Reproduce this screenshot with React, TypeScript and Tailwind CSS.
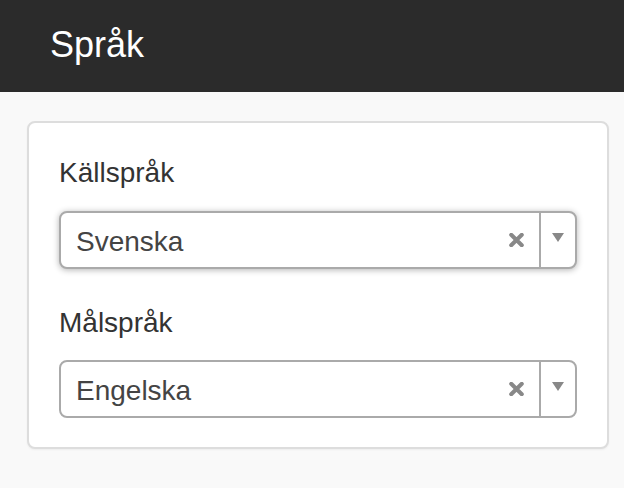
import React from "react";

function ClearIcon() {
  return (
    <svg width="15" height="14" viewBox="0 0 15 14" className="block">
      <path d="M2.2 1.8 L12.8 12.2 M12.8 1.8 L2.2 12.2" stroke="#888" strokeWidth="4" strokeLinecap="round" />
    </svg>
  );
}

function Caret() {
  return (
    <svg width="12" height="9" viewBox="0 0 12 9" className="block">
      <path d="M0 0 H12 L6 9 Z" fill="#888" />
    </svg>
  );
}

function LangSelect({ value, focused }: { value: string; focused?: boolean }) {
  return (
    <div
      className={
        "flex h-[58px] items-stretch rounded-[8px] border-2 border-[#aaa] bg-white " +
        (focused ? "shadow-[0_1px_6px_rgba(0,0,0,0.3)]" : "")
      }
    >
      <div className="flex flex-1 items-center pl-[15px] pt-[3px] text-[28px] text-[#444]">{value}</div>
      <div className="flex w-[36px] items-center justify-center pr-[9px]">
        <ClearIcon />
      </div>
      <div className="w-[2px] bg-[#aaa]" />
      <div className="flex w-[34px] justify-center pt-[20px]">
        <Caret />
      </div>
    </div>
  );
}

export default function App() {
  return (
    <div className="min-h-[488px] bg-[#f9f9f9] font-['Liberation_Sans',Arial,sans-serif]">
      <div className="flex h-[92px] items-center bg-[#2b2b2b] pl-[50px]">
        <h1 className="mb-[2px] text-[36px] leading-none text-white">Språk</h1>
      </div>
      <div className="pl-[27px] pr-[15px] pt-[29px]">
        <div className="rounded-[8px] border-2 border-[#ddd] bg-white px-[30px] pt-[30px] pb-[29px] shadow-[0_1px_2px_rgba(0,0,0,0.05)]">
          <label className="mb-[18px] block text-[28px] leading-[40px] text-[#333]">Källspråk</label>
          <LangSelect value="Svenska" focused />
          <label className="mt-[34px] mb-[17px] block text-[28px] leading-[40px] text-[#333]">Målspråk</label>
          <LangSelect value="Engelska" />
        </div>
      </div>
    </div>
  );
}
